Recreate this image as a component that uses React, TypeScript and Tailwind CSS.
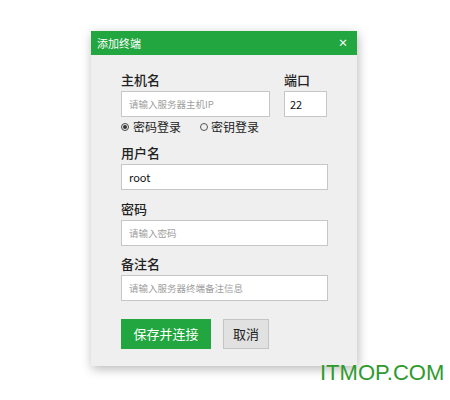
import React from 'react';

const font = { fontFamily: '"Noto Sans CJK SC", "Liberation Sans", sans-serif' };

function Field({ label, placeholder, value, mt }: { label: string; placeholder?: string; value?: string; mt: string }) {
  return (
    <div className={mt}>
      <div className="text-[13px] leading-[16px] font-medium text-[#222]">{label}</div>
      <div className="mt-[3px] w-[207px] h-[26px] bg-white border border-[#c6c6c6] flex items-center px-[7px]">
        {value ? (
          <span className="text-[11px] text-[#111]">{value}</span>
        ) : (
          <span className="text-[9.5px] text-[#a0a0a0]">{placeholder}</span>
        )}
      </div>
    </div>
  );
}

export default function App() {
  return (
    <div className="relative w-[450px] h-[400px] bg-white overflow-hidden" style={font}>
      <div className="pl-[91px] pt-[31px]">
        <div className="w-[266px] h-[335px] bg-[#efefef] shadow-[1px_3px_10px_rgba(0,0,0,0.28)]">
          {/* title bar */}
          <div className="h-[24px] bg-[#22a63f] flex items-center justify-between pl-[6px] pr-[9px]">
            <span className="text-[11px] text-white">添加终端</span>
            <span className="text-[10px] font-bold text-white leading-none">×</span>
          </div>

          <div className="pl-[30px] pt-[17px]">
            {/* host + port */}
            <div className="flex gap-[14px]">
              <div>
                <div className="text-[13px] leading-[16px] font-medium text-[#222]">主机名</div>
                <div className="mt-[3px] w-[149px] h-[26px] bg-white border border-[#c6c6c6] flex items-center px-[7px]">
                  <span className="text-[9.5px] text-[#a0a0a0]">请输入服务器主机IP</span>
                </div>
              </div>
              <div>
                <div className="text-[13px] leading-[16px] font-medium text-[#222]">端口</div>
                <div className="mt-[3px] w-[43px] h-[26px] bg-white border border-[#c6c6c6] flex items-center px-[5px]">
                  <span className="text-[11px] text-[#111]">22</span>
                </div>
              </div>
            </div>

            {/* login type */}
            <div className="mt-[2px] h-[16px] flex items-center text-[12px] text-[#222]">
              <div className="flex items-center gap-[4px]">
                <span className="w-[8px] h-[8px] rounded-full border border-[#444] flex items-center justify-center">
                  <span className="w-[4px] h-[4px] rounded-full bg-[#333]" />
                </span>
                <span>密码登录</span>
              </div>
              <div className="flex items-center gap-[3px] ml-[19px]">
                <span className="w-[8px] h-[8px] rounded-full border border-[#555]" />
                <span>密钥登录</span>
              </div>
            </div>

            <Field label="用户名" value="root" mt="mt-[10px]" />
            <Field label="密码" placeholder="请输入密码" mt="mt-[11px]" />
            <Field label="备注名" placeholder="请输入服务器终端备注信息" mt="mt-[10px]" />

            {/* buttons */}
            <div className="mt-[18px] flex gap-[12px]">
              <div className="w-[90px] h-[30px] bg-[#22a63f] flex items-center justify-center text-[13px] text-white">
                保存并连接
              </div>
              <div className="w-[46px] h-[30px] bg-[#e1e1e1] border border-[#c4c4c4] flex items-center justify-center text-[13px] text-[#222]">
                取消
              </div>
            </div>
          </div>
        </div>
      </div>

      <div
        className="absolute left-[320px] top-[362px] text-[22px] text-[#2e9a2e] leading-none"
        style={{ fontFamily: '"Liberation Sans", Arial, sans-serif' }}
      >
        ITMOP.COM
      </div>
    </div>
  );
}
